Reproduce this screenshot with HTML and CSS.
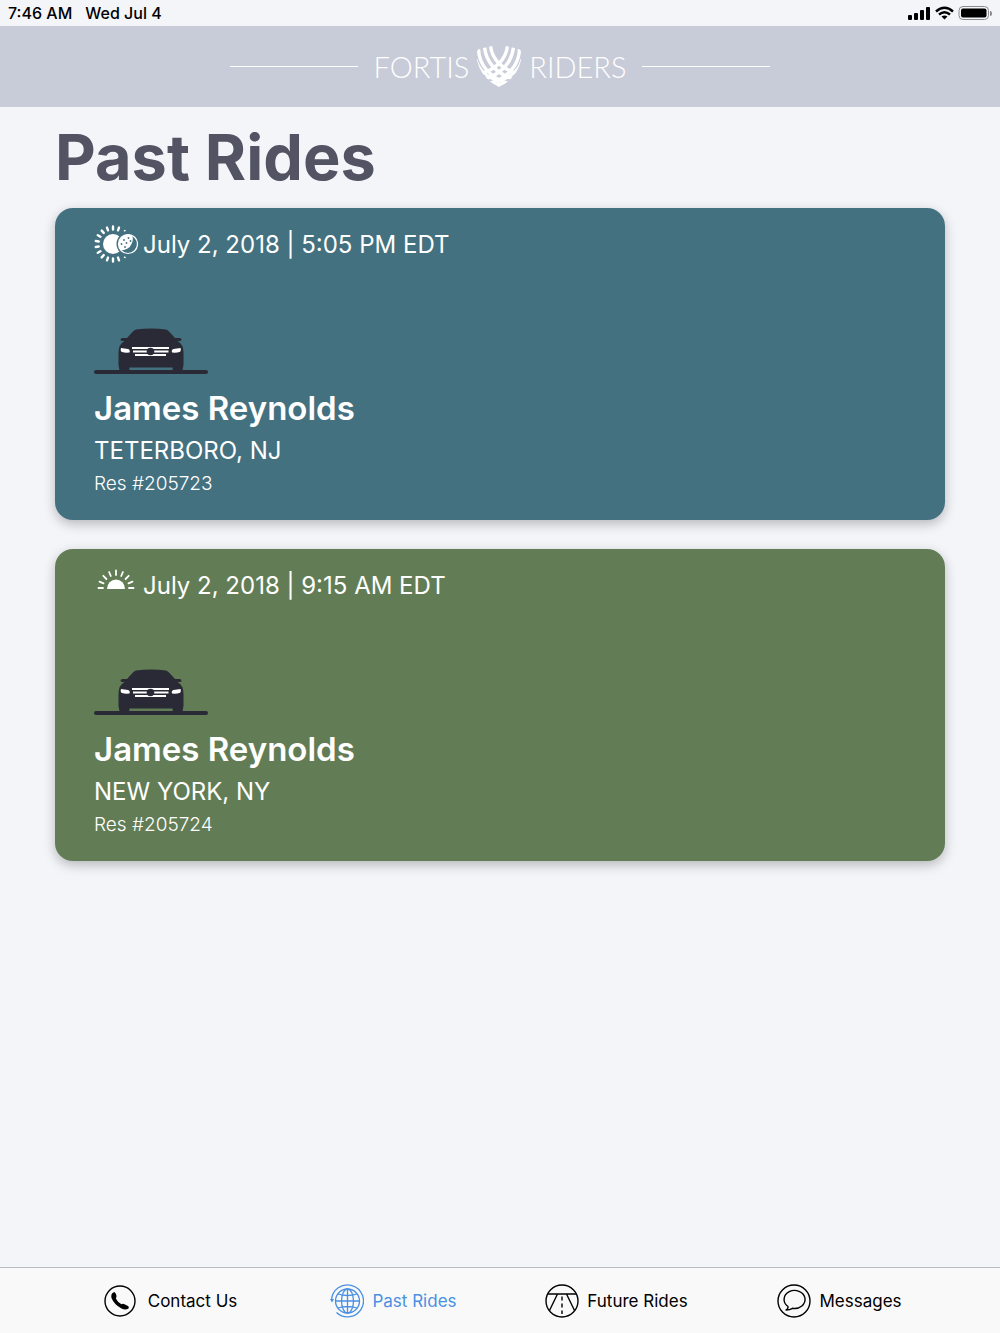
FILE: index.html
```html
<!DOCTYPE html>
<html lang="en">
    <head>
        <meta charset="utf-8" />
        <meta name="viewport" content="width=device-width, initial-scale=1" />
        <title>Fortis Riders - Past Rides</title>
        <link rel="stylesheet" href="styles.css">
    </head>
    <body>
        <!-- shared drawings -->
        <svg class="defs" aria-hidden="true">
            <symbol id="car" viewBox="0 0 114 48">
                <path fill="#292a36" d="M42 1.500Q57 -.5 72 1.500Q74 2 75.500 4L81 10H85.500Q87.500 10 87.500 11.500Q87.500 13 85.500 13H83.500Q89.500 16 89.500 25V37L88 45H79L78.500 39.500H35.500L35 45H26L24.500 37V25Q24.500 16 30.500 13H28.500Q26.500 13 26.500 11.500Q26.500 10 28.500 10H33L38.500 4Q40 2 42 1.500Z"/>
                <path stroke="#292a36" stroke-width="4" stroke-linecap="round" d="M2 44H112"/>
                <path stroke="#fff" stroke-width="2.200" d="M38 20H75M39 23.500H74.500M41 27H72"/>
                <path fill="#fff" d="M27 20L34 21Q36.500 22 35.500 24.500Q31 25 28 24Q26 23 27 20ZM86.500 20L79.500 21Q77 22 78 24.500Q82.500 25 85.500 24Q87.500 23 86.500 20Z"/>
                <circle fill="#292a36" cx="56.500" cy="23.500" r="3.800"/>
            </symbol>
        </svg>

        <div class="status">
            <div class="status-left">
                <span>7:46 AM</span>
                <span>Wed Jul 4</span>
            </div>
            <svg width="82" height="16" viewBox="0 0 82 16" aria-hidden="true">
                <rect x="1" y="10" width="4" height="5" rx="1"/>
                <rect x="7" y="8" width="4" height="7" rx="1"/>
                <rect x="13" y="5" width="4" height="10" rx="1"/>
                <rect x="19" y="2" width="4" height="13" rx="1"/>
                <g fill="none" stroke="#000" stroke-width="2.400">
                    <path d="M29 6.500Q37.500 -1 46 6.500"/>
                    <path d="M32 9.500Q37.500 5 43 9.500"/>
                </g>
                <path d="M34.500 11.500Q37.500 9.500 40.500 11.500L37.500 14.500Z"/>
                <rect x="52" y="1.500" width="29.500" height="13" rx="4" fill="none" stroke="#8a8b8f"/>
                <rect x="54" y="3.500" width="25.500" height="9" rx="2"/>
            </svg>
            <span class="battery-tip"></span>
        </div>

        <header class="header">
            <span class="line"></span>
            <div class="logo">
                <span>FORTIS</span>
                <svg width="46" height="42" viewBox="0 0 46 42" aria-hidden="true">
                    <clipPath id="shield"><path d="M0 6L3 3L16 0H30L43 3L46 6Q45 30 23 41Q1 30 0 6Z"/></clipPath>
                    <g clip-path="url(#shield)" fill="none" stroke="#fff" stroke-width="3.400">
                        <path d="M2.500 3C3 19 14 32 32 37.500"/>
                        <path d="M8.500 1C10 16 20 28 38 33"/>
                        <path d="M14.500 0C16 13 26 24 44 28.500"/>
                        <path d="M43.500 3C43 19 32 32 14 37.500"/>
                        <path d="M37.500 1C36 16 26 28 8 33"/>
                        <path d="M31.500 0C30 13 20 24 2 28.500"/>
                        <path stroke-width="2.600" d="M0 13Q4 29 24 36M46 13Q42 29 22 36"/>
                        <path fill="#fff" stroke="none" d="M11 34Q17 37 23 37Q29 37 35 34L23 42Z"/>
                    </g>
                </svg>
                <span>RIDERS</span>
            </div>
            <span class="line"></span>
        </header>

        <main class="main">
            <h1 class="title">Past Rides</h1>

            <article class="card evening">
                <div class="date">
                    <svg width="44" height="38" viewBox="-19 -19 44 38" aria-hidden="true">
                        <g stroke="#fff" stroke-width="2.400" stroke-linecap="round">
                            <path d="M0 -14.500V-17.500M-5 -13.600L-6 -16.400M-9.300 -11.100L-11.300 -13.400M-12.600 -7.300L-15.200 -8.800M-14.300 -2.500L-17.200 -3M-14.300 2.500L-17.200 3M-12.600 7.300L-15.200 8.800M-9.300 11.100L-11.300 13.400M-5 13.600L-6 16.400M0 14.500V17.500M5 -13.600L6 -16.400M5 13.600L6 16.400"/>
                            <path stroke-width="1.500" d="M11.500 -13.200L12 -13.400M11.500 13.200L12 13.400"/>
                        </g>
                        <circle r="10" fill="#fff"/>
                        <circle class="sky" cx="15" r="11.500"/>
                        <circle cx="15" r="9.500" fill="none" stroke="#fff" stroke-width="1.200"/>
                        <path fill="#fff" d="M19 -8.600A9.500 9.500 0 0 0 8 6.400Q16 6 18.500 0Q21 -5 19 -8.600Z"/>
                        <g class="sky">
                            <circle cx="11" cy="-4" r=".9"/><circle cx="15.500" cy="-6" r=".9"/>
                            <circle cx="13.500" cy="-1" r=".9"/><circle cx="17.500" cy="-3" r=".9"/>
                            <circle cx="8.500" cy="0" r=".9"/><circle cx="12" cy="3" r=".9"/>
                        </g>
                    </svg>
                    <time datetime="2018-07-02T17:05-04:00">July 2, 2018 | 5:05 PM EDT</time>
                </div>
                <svg class="car" width="114" height="48" aria-hidden="true"><use href="#car"/></svg>
                <h2 class="name">James Reynolds</h2>
                <p class="place">TETERBORO, NJ</p>
                <p class="res">Res #205723</p>
            </article>

            <article class="card morning">
                <div class="date">
                    <svg width="44" height="38" viewBox="-22 -23 44 38" aria-hidden="true">
                        <path fill="#fff" d="M-9 0A9 9.500 0 0 1 9 0Z"/>
                        <path stroke="#fff" stroke-width="1.800" stroke-linecap="round" d="M-13 -1H-17.500M-12.500 -5.700L-16.500 -7.300M-9.600 -10L-12.700 -13.200M-5.200 -13L-6.900 -17M0 -14V-18.500M5.200 -13L6.900 -17M9.600 -10L12.700 -13.200M12.500 -5.700L16.500 -7.300M13 -1H17.500"/>
                    </svg>
                    <time datetime="2018-07-02T09:15-04:00">July 2, 2018 | 9:15 AM EDT</time>
                </div>
                <svg class="car" width="114" height="48" aria-hidden="true"><use href="#car"/></svg>
                <h2 class="name">James Reynolds</h2>
                <p class="place">NEW YORK, NY</p>
                <p class="res">Res #205724</p>
            </article>
        </main>

        <nav class="tabs">
            <a class="tab contact" href="#contact">
                <svg width="32" height="34" viewBox="0 0 32 34" aria-hidden="true">
                    <circle cx="16" cy="17" r="15" fill="none" stroke="currentColor" stroke-width="1.400"/>
                    <path fill="currentColor" d="M7.500 10.500Q8 8.500 10.500 8Q12.500 10 12.500 12Q12.500 13.500 11.800 14.500Q13.500 18 17.500 20.300Q18.500 19.500 20 20L24 22Q25.500 23 24.500 24.500Q21.500 26.500 17.500 24.500Q10 20.500 7.500 14Q7 12 7.500 10.500Z"/>
                </svg>
                Contact Us
            </a>
            <a class="tab active" href="#past">
                <svg width="34" height="34" viewBox="0 0 34 34" aria-hidden="true" fill="none" stroke="currentColor" stroke-width="1.300">
                    <circle cx="17.500" cy="17" r="12"/>
                    <ellipse cx="17.500" cy="17" rx="6" ry="12"/>
                    <path d="M17.500 5V29M5.500 17H29.500M8 10Q17.500 13 27 10M8 24Q17.500 21 27 24"/>
                    <path d="M1.500 16A16 16 0 1 1 6.500 28.500"/>
                    <path fill="currentColor" stroke="none" d="M0 15H4L2 18.500Z"/>
                </svg>
                Past Rides
            </a>
            <a class="tab" href="#future">
                <svg width="34" height="34" viewBox="0 0 34 34" aria-hidden="true" fill="none" stroke="currentColor" stroke-width="1.400">
                    <circle cx="17" cy="17" r="16"/>
                    <path d="M3 10H31M12.500 10L4.500 26.500M21.500 10L29.500 26.500"/>
                    <path stroke-dasharray="4 3" d="M17 12.500V30"/>
                </svg>
                Future Rides
            </a>
            <a class="tab" href="#messages">
                <svg width="34" height="34" viewBox="0 0 34 34" aria-hidden="true" fill="none" stroke="currentColor" stroke-width="1.400">
                    <circle cx="17" cy="17" r="16"/>
                    <path d="M11 22.500A10.500 9 0 1 1 15.500 24.300Q13 26 9 26Q11.500 24.500 11 22.500Z" stroke-linejoin="round"/>
                </svg>
                Messages
            </a>
        </nav>
    </body>
</html>
```

FILE: styles.css
```css
:root {
    --page: #f4f5f9;
    --blue: #437180;
    --green: #627d55;
    --active: #4a90e2;
}

* {
    margin: 0;
    padding: 0;
    box-sizing: border-box;
}

body {
    display: flex;
    flex-direction: column;
    min-height: 100vh;
    background: var(--page);
    font-family: Inter, "Liberation Sans", sans-serif;
}

svg {
    display: block;
    flex-shrink: 0;
}

.defs {
    position: absolute;
    width: 0;
    height: 0;
}

.status {
    display: flex;
    align-items: center;
    height: 26px;
    padding: 0 8px;
    font-size: 16px;
    font-weight: 500;
}

.status-left {
    display: flex;
    gap: 13px;
    margin-right: auto;
}

.battery-tip {
    width: 2px;
    height: 5px;
    margin-left: 1px;
    border-radius: 0 2px 2px 0;
    background: #8a8b8f;
}

.header {
    display: flex;
    justify-content: center;
    align-items: center;
    gap: 16px;
    height: 81px;
    background: #c8ccd8;
}

.line {
    width: 128px;
    height: 1px;
    background: #fff;
}

.logo {
    display: flex;
    align-items: center;
    gap: 7px;
    color: #fff;
    font-family: Lato, sans-serif;
    font-size: 29px;
    font-weight: 300;
    line-height: 40px;
}

.main {
    flex: 1;
    padding: 18px 55px 29px;
}

.title {
    margin-bottom: 19px;
    color: #525363;
    font-size: 63px;
    font-weight: 700;
    line-height: 64px;
}

.card {
    padding: 16px 39px 24px;
    border-radius: 18px;
    color: #fff;
    box-shadow: 0 4px 12px rgba(0, 0, 0, 0.25);
}

.card + .card {
    margin-top: 29px;
}

.evening {
    background: var(--blue);
}

.morning {
    background: var(--green);
}

.sky {
    fill: var(--blue);
}

.date {
    display: flex;
    align-items: center;
    gap: 5px;
    height: 40px;
    font-size: 24px;
}

.car {
    margin-top: 64px;
}

.name {
    margin-top: 12px;
    font-size: 33px;
    font-weight: 600;
    line-height: 40px;
}

.place {
    margin-top: 7px;
    font-size: 24px;
    line-height: 32px;
}

.res {
    margin-top: 5px;
    font-size: 19px;
    font-weight: 300;
    line-height: 24px;
}

.tabs {
    display: grid;
    grid-template-columns: repeat(4, 1fr);
    height: 66px;
    padding: 1px 49px 0 59px;
    border-top: 1px solid #b9babf;
    background: #f9f9f9;
}

.tab {
    display: flex;
    justify-content: center;
    align-items: center;
    gap: 8px;
    color: #000;
    font-size: 17px;
    text-decoration: none;
}

.contact {
    gap: 12px;
}

.active {
    color: var(--active);
}
```
